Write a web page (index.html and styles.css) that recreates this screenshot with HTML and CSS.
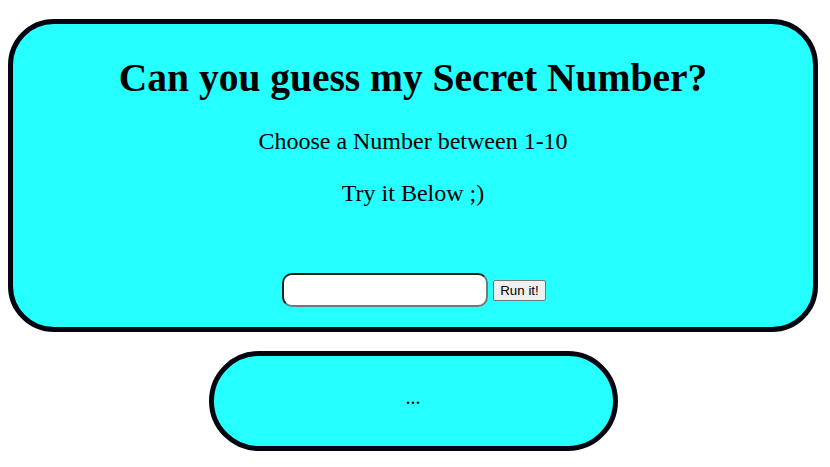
FILE: index.html
```html
<!DOCTYPE html>
<html>
<head>
<meta charset="utf-8">
<link rel="stylesheet" href="styles.css">
</head>
<body>
<div class="page">
  <div class="card">
    <h1 class="title">Can you guess my Secret Number?</h1>
    <p class="line">Choose a Number between 1-10</p>
    <p class="line">Try it Below ;)</p>
    <div class="form-row">
      <input class="guess" type="text">
      <button class="run">Run it!</button>
    </div>
  </div>
  <div class="result">...</div>
</div>
</body>
</html>
```
FILE: styles.css
```css
html, body {
  background: #ffffff;
}
body {
  margin: 8px;
  font-family: "Liberation Serif", "Times New Roman", serif;
  color: #000;
}
.page {
  width: 810px;
  padding-top: 11px;
}
.card {
  background: #26ffff;
  border: 5px solid #05050f;
  border-radius: 46px;
  padding: 4px 10px 20px;
  text-align: center;
}
.title {
  font-size: 39.5px;
  font-weight: bold;
  margin: 27px 0;
  line-height: 46px;
}
.line {
  font-size: 24px;
  line-height: 27.6px;
  margin: 24px 0;
}
.form-row {
  margin-top: 66px;
  display: flex;
  justify-content: center;
  align-items: center;
  gap: 5px;
  padding-left: 2px;
}
.guess {
  box-sizing: border-box;
  width: 206px;
  height: 34px;
  margin: 0;
  border: 2px solid;
  border-color: #1e1e1e #777777 #777777 #1e1e1e;
  border-radius: 10px;
  background: #fff;
  padding: 0 6px;
}
.run {
  box-sizing: border-box;
  height: 21px;
  margin: 0;
  font-family: "Liberation Sans", Arial, sans-serif;
  font-size: 13.33px;
  padding: 0 6px;
  background: #efefef;
  border: 1px solid #767676;
  border-radius: 2px;
  color: #000;
}
.result {
  box-sizing: border-box;
  width: 409px;
  height: 100px;
  margin: 19px auto 0;
  padding-bottom: 8px;
  background: #26ffff;
  border: 5px solid #05050f;
  border-radius: 50px;
  display: flex;
  align-items: center;
  justify-content: center;
  font-size: 20px;
}
```
